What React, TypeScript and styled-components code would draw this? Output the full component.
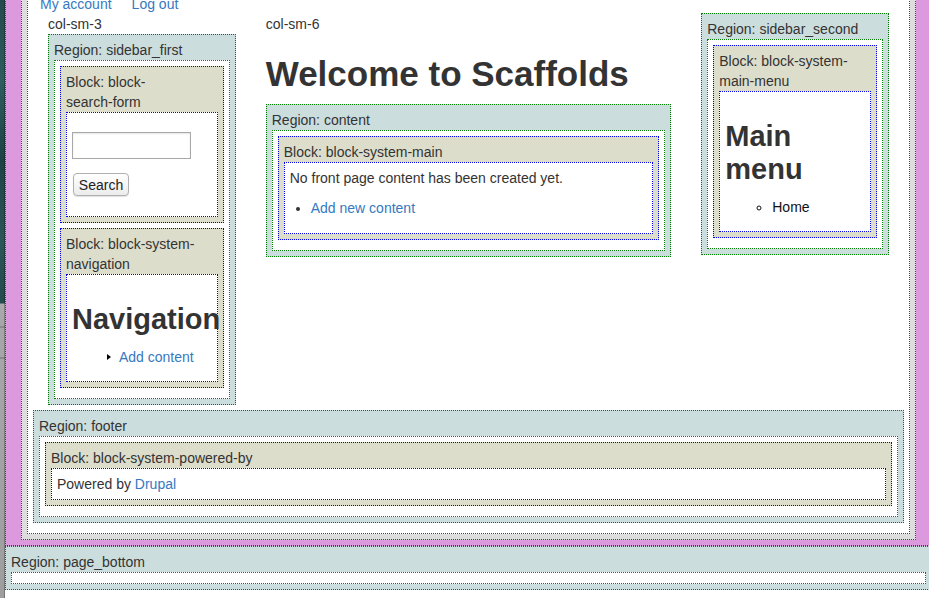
import React from "react";
import styled, { createGlobalStyle } from "styled-components";

const GlobalStyle = createGlobalStyle`
  html, body {
    margin: 0;
    padding: 0;
    overflow: hidden;
    background: #fff;
  }
  body {
    font-family: "Liberation Sans", Arial, Helvetica, sans-serif;
    font-size: 14px;
    line-height: 20px;
    color: #333;
  }
  * { box-sizing: border-box; }
`;

const Screen = styled.div`
  display: flex;
  align-items: stretch;
  width: 932px;
  height: 598px;
  overflow: hidden;
`;

const DesktopEdge = styled.div`
  flex: 0 0 5px;
  background: linear-gradient(
    to bottom,
    #24494c 0,
    #2f5c5e 80px,
    #1d4245 160px,
    #2c5558 240px,
    #234a4c 303px,
    #aaaaaa 304px,
    #a6a6a6 326px,
    #6f6f6f 327px,
    #a6a6a6 328px,
    #a6a6a6 357px,
    #6f6f6f 358px,
    #a6a6a6 359px,
    #9e9e9e 598px
  );
  box-shadow: inset -1px 0 0 rgba(0, 0, 0, 0.25);
`;

const Page = styled.div`
  flex: 0 0 927px;
  display: flex;
  flex-direction: column;
`;

const PinkFrame = styled.div`
  margin-top: -34px;
  border: 1px dotted #d00;
  background: #dd99dd;
  padding: 15px 15px 5px 15px;
`;

const GrayFrame = styled.div`
  border: 1px dotted #d00;
  background: #dddddd;
  padding: 5px;
`;

const WhiteFrame = styled.div`
  border: 1px dotted #d00;
  background: #fff;
  padding: 5px;
`;

const LinksBar = styled.div`
  display: flex;
  gap: 20px;
  padding-left: 7px;
  height: 20px;
`;

const Link = styled.a`
  color: #3579c0;
  text-decoration: none;
`;

const Row = styled.div`
  display: grid;
  grid-template-columns: 1fr 2fr 1fr;
  align-items: start;
`;

const Col = styled.div<{ $shift?: number }>`
  padding: 0 15px;
  min-width: 0;
  margin-top: ${(p) => p.$shift ?? 0}px;
`;

const ColLabel = styled.div`
  height: 20px;
`;

const Title = styled.h1`
  font-size: 35px;
  font-weight: bold;
  line-height: 39.6px;
  margin: 20px 0 10px;
  color: #333;
`;

const Region = styled.div<{ $last?: boolean }>`
  border: 1px dotted #008000;
  background: #ccdddd;
  padding: 5px;
  margin-bottom: ${(p) => (p.$last ? 0 : 5)}px;
`;

const Label = styled.div``;

const NoWrap = styled.span`
  white-space: nowrap;
`;

const RegionInner = styled.div`
  border: 1px dotted #008000;
  background: #fff;
  padding: 5px;
`;

const Block = styled.div`
  border: 1px dotted #0000ee;
  background: #ddddcc;
  padding: 5px;
  margin-bottom: 5px;
`;

const BlockInner = styled.div`
  border: 1px dotted #0000ee;
  background: #fff;
  padding: 5px;
`;

const FormItem = styled.div`
  margin: 14px 0;
`;

const SearchInput = styled.input`
  display: block;
  width: 119px;
  height: 27px;
  border: 1px solid #a8a8a8;
  border-radius: 0;
  box-shadow: inset 0 1px 2px rgba(0, 0, 0, 0.1);
  padding: 2px 4px;
  font: 14px "Liberation Sans", Arial, sans-serif;
  outline: none;
`;

const Actions = styled.div`
  margin: 1px 0 15px;
`;

const Button = styled.button`
  display: block;
  margin-left: 1px;
  width: 56px;
  height: 23px;
  padding: 0;
  border: 1px solid #b0b0b0;
  border-radius: 4px;
  background: linear-gradient(#ffffff, #ececec);
  box-shadow: 0 1px 1px rgba(0, 0, 0, 0.12);
  font: 14px "Liberation Sans", Arial, sans-serif;
  color: #222;
`;

const BlockTitle = styled.h2`
  font-size: 29px;
  font-weight: bold;
  line-height: 33px;
  margin: 23px 0 11px;
  color: #333;
  white-space: nowrap;
`;

const MenuTitle = styled(BlockTitle)`
  white-space: normal;
`;

const Menu = styled.ul`
  margin: 4px 0 9px;
  padding: 0 0 0 40px;
`;

const MenuItem = styled.li<{ $kind: "leaf" | "collapsed" }>`
  margin-left: 7px;
  position: relative;
  list-style-type: ${(p) => (p.$kind === "leaf" ? "circle" : "none")};
  color: #111;
  ${(p) =>
    p.$kind === "collapsed"
      ? `
    &::before {
      content: "";
      position: absolute;
      left: -12px;
      top: 7px;
      border-left: 4px solid #000;
      border-top: 3px solid transparent;
      border-bottom: 3px solid transparent;
    }
  `
      : ""}
`;

const Para = styled.p`
  margin: 0 0 10px;
`;

const ItemList = styled.ul`
  margin: 0 0 10px;
  padding: 0;
`;

const Item = styled.li`
  margin-left: 21px;
  list-style: disc;
`;

export default function App() {
  return (
    <>
      <GlobalStyle />
      <Screen>
        <DesktopEdge />
        <Page>
          <PinkFrame>
            <GrayFrame>
              <WhiteFrame>
                <LinksBar>
                  <Link href="#">My account</Link>
                  <Link href="#">Log out</Link>
                </LinksBar>
                <Row>
                  <Col>
                    <ColLabel>col-sm-3</ColLabel>
                    <Region>
                      <Label>Region: sidebar_first</Label>
                      <RegionInner>
                        <Block>
                          <Label>
                            Block: block-<NoWrap>search-form</NoWrap>
                          </Label>
                          <BlockInner>
                            <FormItem>
                              <SearchInput type="text" aria-label="Search" />
                            </FormItem>
                            <Actions>
                              <Button type="button">Search</Button>
                            </Actions>
                          </BlockInner>
                        </Block>
                        <Block>
                          <Label>Block: block-system-navigation</Label>
                          <BlockInner>
                            <BlockTitle>Navigation</BlockTitle>
                            <Menu>
                              <MenuItem $kind="collapsed">
                                <Link href="#">Add content</Link>
                              </MenuItem>
                            </Menu>
                          </BlockInner>
                        </Block>
                      </RegionInner>
                    </Region>
                  </Col>
                  <Col>
                    <ColLabel>col-sm-6</ColLabel>
                    <Title>Welcome to Scaffolds</Title>
                    <Region>
                      <Label>Region: content</Label>
                      <RegionInner>
                        <Block>
                          <Label>Block: block-system-main</Label>
                          <BlockInner>
                            <Para>No front page content has been created yet.</Para>
                            <ItemList>
                              <Item>
                                <Link href="#">Add new content</Link>
                              </Item>
                            </ItemList>
                          </BlockInner>
                        </Block>
                      </RegionInner>
                    </Region>
                  </Col>
                  <Col $shift={-1}>
                    <Region>
                      <Label>Region: sidebar_second</Label>
                      <RegionInner>
                        <Block>
                          <Label>Block: block-system-main-menu</Label>
                          <BlockInner>
                            <MenuTitle>Main menu</MenuTitle>
                            <Menu>
                              <MenuItem $kind="leaf">Home</MenuItem>
                            </Menu>
                          </BlockInner>
                        </Block>
                      </RegionInner>
                    </Region>
                  </Col>
                </Row>
                <Region>
                  <Label>Region: footer</Label>
                  <RegionInner>
                    <Block>
                      <Label>Block: block-system-powered-by</Label>
                      <BlockInner>
                        Powered by <Link href="#">Drupal</Link>
                      </BlockInner>
                    </Block>
                  </RegionInner>
                </Region>
              </WhiteFrame>
            </GrayFrame>
          </PinkFrame>
          <Region $last>
            <Label>Region: page_bottom</Label>
            <RegionInner />
          </Region>
        </Page>
      </Screen>
    </>
  );
}
